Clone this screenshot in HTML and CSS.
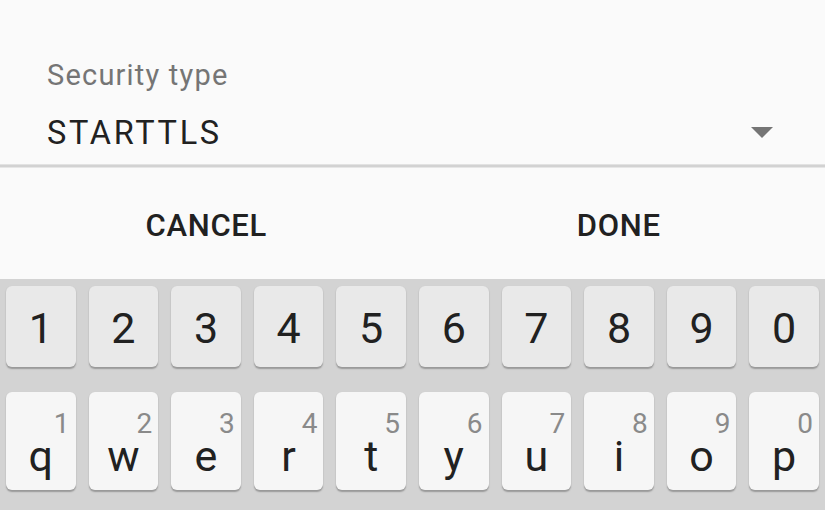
FILE: index.html
```html
<!DOCTYPE html>
<html>
<head>
<meta charset="utf-8">
<link rel="stylesheet" href="styles.css">
</head>
<body>
<div class="screen">
  <section class="field">
    <div class="label">Security type</div>
    <div class="select">
      <span class="value">STARTTLS</span>
      <svg class="caret" width="22" height="11" viewBox="0 0 22 11"><path d="M0 0H22L11 11Z" fill="#757575"/></svg>
    </div>
  </section>
  <div class="divider"></div>
  <section class="actions">
    <button class="action">CANCEL</button>
    <button class="action">DONE</button>
  </section>
  <section class="keyboard">
    <div class="row numbers">
      <div class="key">1</div><div class="key">2</div><div class="key">3</div><div class="key">4</div><div class="key">5</div>
      <div class="key">6</div><div class="key">7</div><div class="key">8</div><div class="key">9</div><div class="key">0</div>
    </div>
    <div class="row letters">
      <div class="key"><span class="hint">1</span><span class="ch">q</span></div>
      <div class="key"><span class="hint">2</span><span class="ch">w</span></div>
      <div class="key"><span class="hint">3</span><span class="ch">e</span></div>
      <div class="key"><span class="hint">4</span><span class="ch">r</span></div>
      <div class="key"><span class="hint">5</span><span class="ch">t</span></div>
      <div class="key"><span class="hint">6</span><span class="ch">y</span></div>
      <div class="key"><span class="hint">7</span><span class="ch">u</span></div>
      <div class="key"><span class="hint">8</span><span class="ch">i</span></div>
      <div class="key"><span class="hint">9</span><span class="ch">o</span></div>
      <div class="key"><span class="hint">0</span><span class="ch">p</span></div>
    </div>
  </section>
</div>
</body>
</html>
```
FILE: styles.css
```css
* { box-sizing: border-box; }
html, body { margin: 0; padding: 0; }
body {
  width: 825px;
  height: 510px;
  overflow: hidden;
  background: #fafafa;
  font-family: Roboto, "Noto Sans", sans-serif;
}
.screen { display: flex; flex-direction: column; height: 510px; }

.field {
  height: 164px;
  padding: 61px 52px 0 47px;
}
.label {
  font-size: 29px;
  line-height: 28px;
  color: #757575;
  letter-spacing: 1.2px;
}
.select {
  margin-top: 28px;
  display: flex;
  align-items: center;
  justify-content: space-between;
  height: 32px;
}
.value {
  font-size: 32.5px;
  line-height: 32px;
  color: #212121;
  letter-spacing: 2.7px;
}
.caret { display: block; margin-top: -1px; }

.divider {
  height: 4px;
  background: linear-gradient(#e2e2e2 0 1px, #d2d2d2 1px 3px, #e6e6e6 3px);
}

.actions {
  height: 111px;
  display: grid;
  grid-template-columns: 1fr 1fr;
}
.action {
  border: 0;
  background: transparent;
  font-family: Roboto, sans-serif;
  font-weight: 500;
  font-size: 31px;
  color: #212121;
  padding: 0;
  margin-top: 4px;
  letter-spacing: 0.7px;
}

.keyboard {
  flex: 1;
  background: #d3d3d3;
  padding-top: 7px;
}
.row {
  display: grid;
  grid-template-columns: repeat(10, 1fr);
  column-gap: 13px;
  padding: 0 6px;
}
.key {
  border-radius: 6px;
  box-shadow: 0 1.5px 1.5px rgba(0, 0, 0, 0.28);
  color: #212121;
}
.numbers .key {
  height: 81px;
  background: #e9e9e9;
  font-size: 43px;
  line-height: 81px;
  padding-top: 2px;
  text-align: center;
}
.letters { margin-top: 25px; }
.letters .key {
  height: 98px;
  background: #f6f6f6;
  display: flex;
  flex-direction: column;
  padding: 22px 6px 0;
}
.hint {
  font-size: 28px;
  line-height: 20px;
  color: #8a8a8a;
  text-align: right;
}
.ch {
  margin-top: 7px;
  font-size: 43px;
  line-height: 30px;
  text-align: center;
}
```
